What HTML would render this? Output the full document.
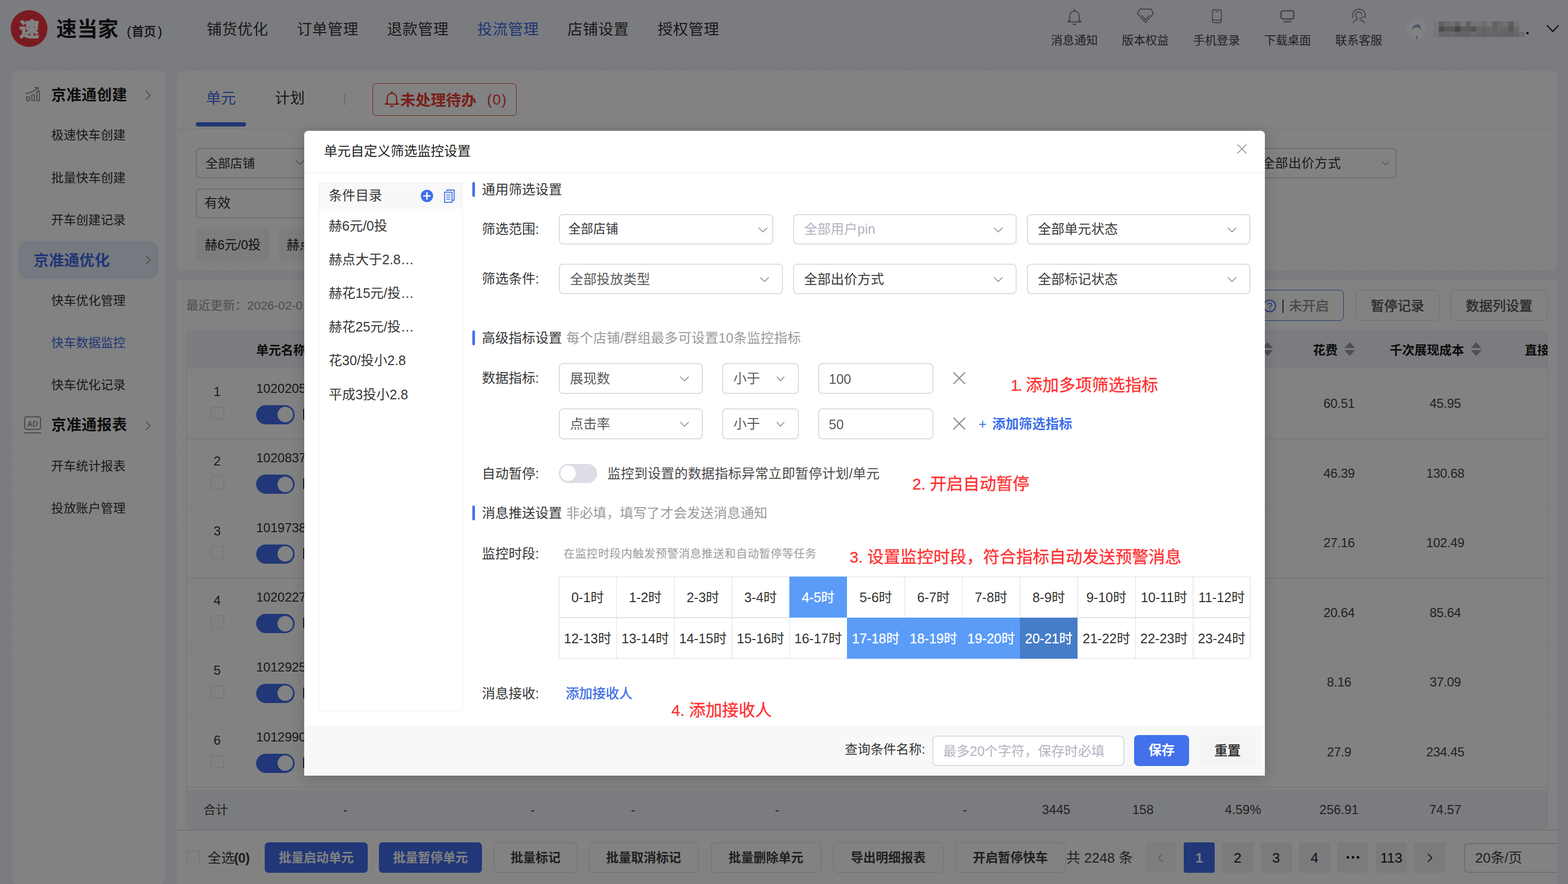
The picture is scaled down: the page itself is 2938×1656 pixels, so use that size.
<!DOCTYPE html>
<html lang="zh-CN"><head><meta charset="utf-8"><title>速当家</title><style>
html,body{margin:0;padding:0;}
body{width:2938px;height:1656px;overflow:hidden;position:relative;font-family:"Liberation Sans", "Noto Sans CJK SC", sans-serif;background:#f1f3fc;}
#bg{position:absolute;left:0;top:0;width:2938px;height:1656px;overflow:hidden;background:linear-gradient(180deg,#f1f3fb 0%,#f0f2fa 100%);}
#bg>div,#bg>svg,#modal>div,#modal>svg{position:absolute;}
.t{white-space:nowrap;}
#mask{position:absolute;left:0;top:0;width:2938px;height:1656px;background:rgba(0,0,0,0.49);}
#modal{position:absolute;left:570px;top:245px;width:1800px;height:1207.5px;background:#fff;border-radius:8px 8px 0 0;box-shadow:0 5px 26px rgba(0,0,0,0.19);}
</style></head><body>
<div id="bg">
<div style="left:20px;top:19px;width:69px;height:69px;border-radius:50%;background:#ee3541;"></div>
<div class="t" style="left:-345px;width:800px;text-align:center;top:31.3px;font-size:37px;line-height:52px;height:52px;color:#fff;font-weight:900;-webkit-text-stroke:1.1px #fff;stroke:#fff;stroke-width:30;">速</div>
<div class="t" style="left:105.5px;top:27.8px;font-size:38.4px;line-height:54px;height:54px;color:#1a1a1a;font-weight:700;letter-spacing:0.5px;--ls:0.5px;">速当家</div>
<div class="t" style="left:237.5px;top:41.5px;font-size:25px;line-height:35px;height:35px;color:#1a1a1a;font-weight:400;">(</div>
<div class="t" style="left:247px;top:43.6px;font-size:22.6px;line-height:32px;height:32px;color:#1a1a1a;font-weight:400;-webkit-text-stroke:0.5px #1a1a1a;stroke:#1a1a1a;stroke-width:22;">首页</div>
<div class="t" style="left:295.5px;top:41.5px;font-size:25px;line-height:35px;height:35px;color:#1a1a1a;font-weight:400;">)</div>
<div class="t" style="left:387.3px;top:35px;font-size:28.3px;line-height:40px;height:40px;color:#333;font-weight:400;letter-spacing:0.5px;--ls:0.5px;">铺货优化</div>
<div class="t" style="left:556.3px;top:35px;font-size:28.3px;line-height:40px;height:40px;color:#333;font-weight:400;letter-spacing:0.5px;--ls:0.5px;">订单管理</div>
<div class="t" style="left:725.3px;top:35px;font-size:28.3px;line-height:40px;height:40px;color:#333;font-weight:400;letter-spacing:0.5px;--ls:0.5px;">退款管理</div>
<div class="t" style="left:894.3px;top:35px;font-size:28.3px;line-height:40px;height:40px;color:#3f6be6;font-weight:400;letter-spacing:0.5px;--ls:0.5px;">投流管理</div>
<div class="t" style="left:1063.3px;top:35px;font-size:28.3px;line-height:40px;height:40px;color:#333;font-weight:400;letter-spacing:0.5px;--ls:0.5px;">店铺设置</div>
<div class="t" style="left:1232.3px;top:35px;font-size:28.3px;line-height:40px;height:40px;color:#333;font-weight:400;letter-spacing:0.5px;--ls:0.5px;">授权管理</div>
<div class="t" style="left:1613px;width:800px;text-align:center;top:59.5px;font-size:22px;line-height:31px;height:31px;color:#444;font-weight:400;">消息通知</div>
<div class="t" style="left:1746px;width:800px;text-align:center;top:59.5px;font-size:22px;line-height:31px;height:31px;color:#444;font-weight:400;">版本权益</div>
<div class="t" style="left:1879.5px;width:800px;text-align:center;top:59.5px;font-size:22px;line-height:31px;height:31px;color:#444;font-weight:400;">手机登录</div>
<div class="t" style="left:2012.5px;width:800px;text-align:center;top:59.5px;font-size:22px;line-height:31px;height:31px;color:#444;font-weight:400;">下载桌面</div>
<div class="t" style="left:2146px;width:800px;text-align:center;top:59.5px;font-size:22px;line-height:31px;height:31px;color:#444;font-weight:400;">联系客服</div>
<svg style="left:1996px;top:12px;" width="34" height="38" viewBox="0 0 34 38" fill="none"><path d="M8.5 28.8 V17.45 A8.75 8.75 0 0 1 26 17.45 V28.8 M8.5 25 L5.4 28.6 M26 25 L29.1 28.6 M4.8 29.1 H29.7" stroke="#86868c" stroke-width="2" stroke-linecap="round" stroke-linejoin="round"/><circle cx="17.25" cy="6.7" r="1.7" fill="#86868c"/><path d="M13.9 32.2 h6.6 a3.3 3.1 0 0 1 -6.6 0z" fill="#86868c"/></svg>
<svg style="left:2128px;top:13px;" width="36" height="34" viewBox="0 0 36 34" fill="none"><path d="M7.6 4 H28.9 L33.1 12.3 L18.3 29.2 L3.3 12.3 Z M11.1 15.7 L18.3 24 L25.5 15.7" stroke="#86868c" stroke-width="2" stroke-linejoin="round" stroke-linecap="round"/></svg>
<svg style="left:2268px;top:15px;" width="24" height="30" viewBox="0 0 24 30" fill="none"><rect x="3.8" y="3.3" width="16.5" height="24.2" rx="3" stroke="#86868c" stroke-width="1.9"/><path d="M4 22.6 h16" stroke="#86868c" stroke-width="1.8"/><path d="M10.2 6.7 h3.8" stroke="#86868c" stroke-width="1.7" stroke-linecap="round"/></svg>
<svg style="left:2396px;top:16px;" width="32" height="28" viewBox="0 0 32 28" fill="none"><rect x="4.3" y="4.3" width="23.8" height="15.2" rx="3.5" stroke="#86868c" stroke-width="2.6"/><path d="M10 24.7 h12.600" stroke="#86868c" stroke-width="2.4" stroke-linecap="round"/></svg>
<svg style="left:2530px;top:13px;" width="32" height="34" viewBox="0 0 32 34" fill="none"><path d="M4.700 20 v-4 a11.8 11.8 0 0 1 23.600 0 v4 M21.900 14.500 A6 6 0 1 0 13 20.700 L13 23.500 Q7 25 5.500 30 M25.500 17.500 Q23.500 20.500 17.500 21 M18.500 24.500 Q25 25.500 26.500 30" stroke="#86868c" stroke-width="1.900" stroke-linecap="round" stroke-linejoin="round"/></svg>
<div style="left:2634px;top:33.5px;width:40px;height:40px;border-radius:50%;background:#fcfdff;overflow:hidden;"></div>
<svg style="left:2634px;top:33.5px;" width="40" height="40" viewBox="0 0 40 40" fill="none"><defs><clipPath id="avc"><circle cx="20" cy="20" r="20"/></clipPath></defs><g clip-path="url(#avc)"><ellipse cx="20.500" cy="39" rx="12.500" ry="6" fill="#ffffff"/><path d="M17 30 h7 v6 h-7z" fill="#fdfdfd"/><circle cx="20.500" cy="24" r="7.300" fill="#ffffff"/><path d="M12.600 23.500 c-1.200 -7.500 3.200 -11.500 8 -11.200 c1 -1.300 2.600 -1.200 3 -0.300 c4 1.200 5.500 6 4.600 11 c-1.200 -3.600 -3 -5.400 -7 -5.700 c-4.600 0 -7.400 2 -8.600 6.200z" fill="#9aabcf"/><path d="M19.600 33.500 h1.800 l0.700 5.500 h-3.200z" fill="#8ea2d2"/></g></svg>
<svg style="left:2685.6px;top:40px;filter:blur(0.600px);" width="174" height="30" viewBox="0 0 174 30" fill="none"><rect x="0" y="0" width="10" height="29.2" fill="rgb(233,233,237)"/><rect x="10" y="0" width="10.1" height="9.900" fill="rgb(188,188,192)"/><rect x="20.03" y="0" width="10.1" height="9.900" fill="rgb(210,210,214)"/><rect x="30.06" y="0" width="10.1" height="9.900" fill="rgb(216,216,220)"/><rect x="40.09" y="0" width="10.1" height="9.900" fill="rgb(192,192,196)"/><rect x="50.12" y="0" width="10.1" height="9.900" fill="rgb(231,231,235)"/><rect x="60.15" y="0" width="10.1" height="9.900" fill="rgb(190,190,194)"/><rect x="70.18" y="0" width="10.1" height="9.900" fill="rgb(225,225,229)"/><rect x="80.21" y="0" width="10.1" height="9.900" fill="rgb(227,227,231)"/><rect x="90.24" y="0" width="10.1" height="9.900" fill="rgb(212,212,216)"/><rect x="100.27" y="0" width="10.1" height="9.900" fill="rgb(235,235,239)"/><rect x="110.3" y="0" width="10.1" height="9.900" fill="rgb(190,190,194)"/><rect x="120.33" y="0" width="10.1" height="9.900" fill="rgb(208,208,212)"/><rect x="130.36" y="0" width="10.1" height="9.900" fill="rgb(220,220,224)"/><rect x="140.39" y="0" width="10.1" height="9.900" fill="rgb(182,182,186)"/><rect x="150.42" y="0" width="10.1" height="9.900" fill="rgb(227,227,231)"/><rect x="10" y="9.7" width="10.1" height="9.900" fill="rgb(149,149,153)"/><rect x="20.03" y="9.7" width="10.1" height="9.900" fill="rgb(176,176,180)"/><rect x="30.06" y="9.7" width="10.1" height="9.900" fill="rgb(173,173,177)"/><rect x="40.09" y="9.7" width="10.1" height="9.900" fill="rgb(137,137,141)"/><rect x="50.12" y="9.7" width="10.1" height="9.900" fill="rgb(180,180,184)"/><rect x="60.15" y="9.7" width="10.1" height="9.900" fill="rgb(176,176,180)"/><rect x="70.18" y="9.7" width="10.1" height="9.900" fill="rgb(165,165,169)"/><rect x="80.21" y="9.7" width="10.1" height="9.900" fill="rgb(200,200,204)"/><rect x="90.24" y="9.7" width="10.1" height="9.900" fill="rgb(192,192,196)"/><rect x="100.27" y="9.7" width="10.1" height="9.900" fill="rgb(204,204,208)"/><rect x="110.3" y="9.7" width="10.1" height="9.900" fill="rgb(196,196,200)"/><rect x="120.33" y="9.7" width="10.1" height="9.900" fill="rgb(204,204,208)"/><rect x="130.36" y="9.7" width="10.1" height="9.900" fill="rgb(196,196,200)"/><rect x="140.39" y="9.7" width="10.1" height="9.900" fill="rgb(169,169,173)"/><rect x="150.42" y="9.7" width="10.1" height="9.900" fill="rgb(204,204,208)"/><rect x="10" y="19.4" width="10.1" height="9.900" fill="rgb(200,200,204)"/><rect x="20.03" y="19.4" width="10.1" height="9.900" fill="rgb(200,200,204)"/><rect x="30.06" y="19.4" width="10.1" height="9.900" fill="rgb(208,208,212)"/><rect x="40.09" y="19.4" width="10.1" height="9.900" fill="rgb(192,192,196)"/><rect x="50.12" y="19.4" width="10.1" height="9.900" fill="rgb(196,196,200)"/><rect x="60.15" y="19.4" width="10.1" height="9.900" fill="rgb(196,196,200)"/><rect x="70.18" y="19.4" width="10.1" height="9.900" fill="rgb(208,208,212)"/><rect x="80.21" y="19.4" width="10.1" height="9.900" fill="rgb(200,200,204)"/><rect x="90.24" y="19.4" width="10.1" height="9.900" fill="rgb(196,196,200)"/><rect x="100.27" y="19.4" width="10.1" height="9.900" fill="rgb(200,200,204)"/><rect x="110.3" y="19.4" width="10.1" height="9.900" fill="rgb(200,200,204)"/><rect x="120.33" y="19.4" width="10.1" height="9.900" fill="rgb(196,196,200)"/><rect x="130.36" y="19.4" width="10.1" height="9.900" fill="rgb(192,192,196)"/><rect x="140.39" y="19.4" width="10.1" height="9.900" fill="rgb(192,192,196)"/><rect x="150.42" y="19.4" width="10.1" height="9.900" fill="rgb(200,200,204)"/><rect x="160.45" y="19.4" width="10.1" height="9.900" fill="rgb(212,212,216)"/></svg>
<div style="left:2860.4px;top:60px;width:3.6px;height:3.6px;background:#111;"></div>
<svg style="left:2897.2px;top:46px;" width="25" height="15" viewBox="0 0 25 15" fill="none"><path d="M2 2 L12.5 13 L23 2" stroke="#1a1a1a" stroke-width="2.2" stroke-linecap="round" stroke-linejoin="round"/></svg>
<div style="left:22px;top:133px;width:288px;height:1523px;background:#fff;border-radius:12px;"></div>
<div style="left:331px;top:133px;width:2587px;height:374px;background:#fff;border-radius:12px;"></div>
<div style="left:331px;top:240px;width:2587px;height:1px;background:#ececf0;"></div>
<div style="left:331px;top:525px;width:2587px;height:1140px;background:#fff;"></div>
<svg style="left:46px;top:161px;" width="32" height="32" viewBox="0 0 32 32" fill="none"><path d="M4 20.500 h5 v7 h-5z M13.500 16.500 h5 v11 h-5z M23 10.500 h5 v17 h-5z" stroke="#8a93a6" stroke-width="2" stroke-linejoin="round"/><path d="M3 14 c8-1 15-4 22-11 M19.500 3 h6 v6" stroke="#8a93a6" stroke-width="2" stroke-linecap="round" stroke-linejoin="round"/></svg>
<div class="t" style="left:96px;top:158.5px;font-size:28px;line-height:39px;height:39px;color:#1a1a1a;font-weight:700;letter-spacing:0.5px;--ls:0.5px;">京准通创建</div>
<svg style="left:271.95px;top:168.5px;" width="11.5" height="19" viewBox="0 0 11.5 19" fill="none"><path d="M2 2 L9.5 9.5 L2 17" stroke="#a0a0a0" stroke-width="1.9" stroke-linecap="round" stroke-linejoin="round"/></svg>
<div class="t" style="left:96px;top:237px;font-size:23.2px;line-height:32px;height:32px;color:#333;font-weight:400;">极速快车创建</div>
<div class="t" style="left:96px;top:316.5px;font-size:23.2px;line-height:32px;height:32px;color:#333;font-weight:400;">批量快车创建</div>
<div class="t" style="left:96px;top:396px;font-size:23.2px;line-height:32px;height:32px;color:#333;font-weight:400;">开车创建记录</div>
<div style="left:34px;top:451px;width:263px;height:72px;background:#e9eefc;border-radius:18px;"></div>
<div class="t" style="left:63px;top:467.5px;font-size:28.5px;line-height:40px;height:40px;color:#3f6be6;font-weight:700;">京准通优化</div>
<svg style="left:271.95px;top:477.5px;" width="11.5" height="19" viewBox="0 0 11.5 19" fill="none"><path d="M2 2 L9.5 9.5 L2 17" stroke="#a0a0a0" stroke-width="1.9" stroke-linecap="round" stroke-linejoin="round"/></svg>
<div class="t" style="left:96px;top:547px;font-size:23.2px;line-height:32px;height:32px;color:#333;font-weight:400;">快车优化管理</div>
<div class="t" style="left:96px;top:626px;font-size:23.2px;line-height:32px;height:32px;color:#3f6be6;font-weight:400;">快车数据监控</div>
<div class="t" style="left:96px;top:705px;font-size:23.2px;line-height:32px;height:32px;color:#333;font-weight:400;">快车优化记录</div>
<svg style="left:43px;top:778px;" width="38" height="38" viewBox="0 0 38 38" fill="none"><rect x="3.2" y="2.8" width="29.800" height="23.400" rx="3.5" stroke="#8a93a6" stroke-width="2"/><path d="M2.2 33 h31.800" stroke="#8a93a6" stroke-width="2"/><text x="18.300" y="20.900" font-family='"Liberation Sans",sans-serif' font-size="14" font-weight="400" letter-spacing="0.4" fill="#8a93a6" stroke="#8a93a6" stroke-width="0.5" text-anchor="middle">AD</text></svg>
<div class="t" style="left:96px;top:777px;font-size:28px;line-height:39px;height:39px;color:#1a1a1a;font-weight:700;letter-spacing:0.5px;--ls:0.5px;">京准通报表</div>
<svg style="left:271.95px;top:787.5px;" width="11.5" height="19" viewBox="0 0 11.5 19" fill="none"><path d="M2 2 L9.5 9.5 L2 17" stroke="#a0a0a0" stroke-width="1.9" stroke-linecap="round" stroke-linejoin="round"/></svg>
<div class="t" style="left:96px;top:857px;font-size:23.2px;line-height:32px;height:32px;color:#333;font-weight:400;">开车统计报表</div>
<div class="t" style="left:96px;top:936px;font-size:23.2px;line-height:32px;height:32px;color:#333;font-weight:400;">投放账户管理</div>
<div class="t" style="left:386px;top:164.5px;font-size:28px;line-height:39px;height:39px;color:#3f6be6;font-weight:400;">单元</div>
<div style="left:367px;top:229px;width:94px;height:8px;background:#3f6be6;border-radius:4px;"></div>
<div class="t" style="left:515px;top:164.5px;font-size:28px;line-height:39px;height:39px;color:#333;font-weight:400;">计划</div>
<div style="left:645px;top:175px;width:1.5px;height:22px;background:#d0d0d4;"></div>
<div style="left:698px;top:156px;width:270px;height:61px;border:1.500px solid #ec3d35;border-radius:7px;box-sizing:border-box;"></div>
<svg style="left:717px;top:166px;" width="34" height="38" viewBox="0 0 34 38" fill="none"><path d="M8.5 28.8 V17.45 A8.75 8.75 0 0 1 26 17.45 V28.8 M8.5 25 L5.4 28.6 M26 25 L29.1 28.6 M4.8 29.1 H29.7" stroke="#ec3d35" stroke-width="2.2" stroke-linecap="round" stroke-linejoin="round"/><circle cx="17.25" cy="6.7" r="1.8" fill="#ec3d35"/><path d="M13.9 31.7 h6.6 a3.3 3.1 0 0 1 -6.6 0z" fill="#ec3d35"/></svg>
<div class="t" style="left:750px;top:167.6px;font-size:28.5px;line-height:40px;height:40px;color:#ec3d35;font-weight:700;">未处理待办</div>
<div class="t" style="left:912.5px;top:167.5px;font-size:27.5px;line-height:38px;height:38px;color:#ec3d35;font-weight:400;letter-spacing:1.4px;">(0)</div>
<div style="left:367px;top:277.4px;width:300px;height:56.3px;border:2px solid #d6d8e2;border-radius:8px;box-sizing:border-box;background:#fff;"></div>
<div class="t" style="left:385px;top:290px;font-size:23.2px;line-height:32px;height:32px;color:#333;font-weight:400;">全部店铺</div>
<svg style="left:553px;top:298.5px;" width="18" height="11" viewBox="0 0 18 11" fill="none"><path d="M2 2 L9 9 L16 2" stroke="#999" stroke-width="1.6" stroke-linecap="round" stroke-linejoin="round"/></svg>
<div style="left:367px;top:353px;width:300px;height:56px;border:2px solid #d6d8e2;border-radius:8px;box-sizing:border-box;background:#fff;"></div>
<div class="t" style="left:383px;top:364px;font-size:24.5px;line-height:34px;height:34px;color:#333;font-weight:400;">有效</div>
<div style="left:2300px;top:277.4px;width:317px;height:56.3px;border:2px solid #d6d8e2;border-radius:8px;box-sizing:border-box;background:#fff;"></div>
<div class="t" style="left:2364.5px;top:289px;font-size:24px;line-height:34px;height:34px;color:#333;font-weight:400;letter-spacing:0.75px;--ls:0.75px;">全部出价方式</div>
<svg style="left:2588px;top:301px;" width="16" height="10" viewBox="0 0 16 10" fill="none"><path d="M2 2 L8 8 L14 2" stroke="#aaa" stroke-width="1.6" stroke-linecap="round" stroke-linejoin="round"/></svg>
<div style="left:367px;top:428px;width:137px;height:61px;background:#f6f6f8;border-radius:7px;"></div>
<div class="t" style="left:383.5px;top:442px;font-size:24px;line-height:34px;height:34px;color:#222;font-weight:400;">赫6元/0投</div>
<div style="left:522px;top:428px;width:137px;height:61px;background:#f6f6f8;border-radius:7px;"></div>
<div class="t" style="left:537px;top:442px;font-size:24px;line-height:34px;height:34px;color:#222;font-weight:400;">赫点</div>
<div class="t" style="left:349px;top:556px;font-size:22.8px;line-height:32px;height:32px;color:#999;font-weight:400;">最近更新：2026-02-0</div>
<div style="left:2290px;top:543px;width:228px;height:58px;border:1.500px solid #3f6be6;border-radius:8px;box-sizing:border-box;"></div>
<svg style="left:2365px;top:559px;" width="28" height="28" viewBox="0 0 28 28" fill="none"><circle cx="14" cy="14" r="11" stroke="#3f6be6" stroke-width="2"/><text x="14" y="21" font-family='"Liberation Sans",sans-serif' font-size="19" fill="#3f6be6" text-anchor="middle">?</text></svg>
<div style="left:2403px;top:561px;width:2.2px;height:25px;background:#444;"></div>
<div class="t" style="left:2415px;top:556px;font-size:25px;line-height:35px;height:35px;color:#8a8a8a;font-weight:400;-webkit-text-stroke:0.3px #8a8a8a;stroke:#8a8a8a;stroke-width:12;">未开启</div>
<div style="left:2540px;top:543px;width:157px;height:58px;border:1.500px solid #dcdce2;border-radius:8px;box-sizing:border-box;"></div>
<div class="t" style="left:2218.5px;width:800px;text-align:center;top:556px;font-size:25px;line-height:35px;height:35px;color:#555;font-weight:400;-webkit-text-stroke:0.55px #555;stroke:#555;stroke-width:22;">暂停记录</div>
<div style="left:2718px;top:543px;width:182px;height:58px;border:1.500px solid #dcdce2;border-radius:8px;box-sizing:border-box;"></div>
<div class="t" style="left:2409px;width:800px;text-align:center;top:556px;font-size:25px;line-height:35px;height:35px;color:#555;font-weight:400;-webkit-text-stroke:0.55px #555;stroke:#555;stroke-width:22;">数据列设置</div>
<div style="left:349px;top:619px;width:2551px;height:934px;border:1.500px solid #e6e6ec;border-radius:8px;box-sizing:border-box;"></div>
<div style="left:350px;top:620px;width:2549px;height:70px;background:#f2f3fa;border-radius:7px 7px 0 0;"></div>
<div class="t" style="left:480px;top:639.5px;font-size:23.2px;line-height:32px;height:32px;color:#161616;font-weight:700;">单元名称</div>
<div class="t" style="left:2460px;top:639.5px;font-size:23.2px;line-height:32px;height:32px;color:#161616;font-weight:700;">花费</div>
<svg style="left:2517px;top:640px;" width="24" height="28" viewBox="0 0 24 28" fill="none"><path d="M12 1 L22 12 H2z M12 27 L22 16 H2z" fill="#9a9ca6"/></svg>
<svg style="left:2363px;top:640px;" width="24" height="28" viewBox="0 0 24 28" fill="none"><path d="M12 1 L22 12 H2z M12 27 L22 16 H2z" fill="#9a9ca6"/></svg>
<div class="t" style="left:2604px;top:639.5px;font-size:23.2px;line-height:32px;height:32px;color:#161616;font-weight:700;">千次展现成本</div>
<svg style="left:2754px;top:640px;" width="24" height="28" viewBox="0 0 24 28" fill="none"><path d="M12 1 L22 12 H2z M12 27 L22 16 H2z" fill="#9a9ca6"/></svg>
<div class="t" style="left:2857px;top:639.5px;font-size:23.2px;line-height:32px;height:32px;color:#161616;font-weight:700;width:43px;overflow:hidden;">直接</div>
<div class="t" style="left:7px;width:800px;text-align:center;top:716.5px;font-size:24px;line-height:34px;height:34px;color:#333;font-weight:400;">1</div>
<div style="left:395px;top:761.5px;width:24.5px;height:24.5px;border:1.500px solid #d5d9e6;border-radius:4px;box-sizing:border-box;background:#fff;"></div>
<div class="t" style="left:480px;top:710.5px;font-size:24px;line-height:34px;height:34px;color:#333;font-weight:400;">1020205</div>
<div style="left:480px;top:758.5px;width:72px;height:36px;background:#416ceb;border-radius:18px;"></div>
<div style="left:520px;top:762px;width:29px;height:29px;background:#fff;border-radius:50%;"></div>
<div style="left:568px;top:765.5px;width:6px;height:20px;background:#333;"></div>
<div class="t" style="left:2109px;width:800px;text-align:center;top:739px;font-size:24px;line-height:34px;height:34px;color:#444;font-weight:400;letter-spacing:-0.3px;">60.51</div>
<div class="t" style="left:2308px;width:800px;text-align:center;top:739px;font-size:24px;line-height:34px;height:34px;color:#444;font-weight:400;letter-spacing:-0.3px;">45.95</div>
<div style="left:350px;top:821.1px;width:2549px;height:1.5px;background:#eeeff4;"></div>
<div class="t" style="left:7px;width:800px;text-align:center;top:847.1px;font-size:24px;line-height:34px;height:34px;color:#333;font-weight:400;">2</div>
<div style="left:395px;top:892.1px;width:24.5px;height:24.5px;border:1.500px solid #d5d9e6;border-radius:4px;box-sizing:border-box;background:#fff;"></div>
<div class="t" style="left:480px;top:841.1px;font-size:24px;line-height:34px;height:34px;color:#333;font-weight:400;">1020837</div>
<div style="left:480px;top:889.1px;width:72px;height:36px;background:#416ceb;border-radius:18px;"></div>
<div style="left:520px;top:892.6px;width:29px;height:29px;background:#fff;border-radius:50%;"></div>
<div style="left:568px;top:896.1px;width:6px;height:20px;background:#333;"></div>
<div class="t" style="left:2109px;width:800px;text-align:center;top:869.6px;font-size:24px;line-height:34px;height:34px;color:#444;font-weight:400;letter-spacing:-0.3px;">46.39</div>
<div class="t" style="left:2308px;width:800px;text-align:center;top:869.6px;font-size:24px;line-height:34px;height:34px;color:#444;font-weight:400;letter-spacing:-0.3px;">130.68</div>
<div style="left:350px;top:951.7px;width:2549px;height:1.5px;background:#eeeff4;"></div>
<div class="t" style="left:7px;width:800px;text-align:center;top:977.7px;font-size:24px;line-height:34px;height:34px;color:#333;font-weight:400;">3</div>
<div style="left:395px;top:1022.7px;width:24.5px;height:24.5px;border:1.500px solid #d5d9e6;border-radius:4px;box-sizing:border-box;background:#fff;"></div>
<div class="t" style="left:480px;top:971.7px;font-size:24px;line-height:34px;height:34px;color:#333;font-weight:400;">1019738</div>
<div style="left:480px;top:1019.7px;width:72px;height:36px;background:#416ceb;border-radius:18px;"></div>
<div style="left:520px;top:1023.2px;width:29px;height:29px;background:#fff;border-radius:50%;"></div>
<div style="left:568px;top:1026.7px;width:6px;height:20px;background:#333;"></div>
<div class="t" style="left:2109px;width:800px;text-align:center;top:1000.2px;font-size:24px;line-height:34px;height:34px;color:#444;font-weight:400;letter-spacing:-0.3px;">27.16</div>
<div class="t" style="left:2308px;width:800px;text-align:center;top:1000.2px;font-size:24px;line-height:34px;height:34px;color:#444;font-weight:400;letter-spacing:-0.3px;">102.49</div>
<div style="left:350px;top:1082.3px;width:2549px;height:1.5px;background:#eeeff4;"></div>
<div class="t" style="left:7px;width:800px;text-align:center;top:1108.3px;font-size:24px;line-height:34px;height:34px;color:#333;font-weight:400;">4</div>
<div style="left:395px;top:1153.3px;width:24.5px;height:24.5px;border:1.500px solid #d5d9e6;border-radius:4px;box-sizing:border-box;background:#fff;"></div>
<div class="t" style="left:480px;top:1102.3px;font-size:24px;line-height:34px;height:34px;color:#333;font-weight:400;">1020227</div>
<div style="left:480px;top:1150.3px;width:72px;height:36px;background:#416ceb;border-radius:18px;"></div>
<div style="left:520px;top:1153.8px;width:29px;height:29px;background:#fff;border-radius:50%;"></div>
<div style="left:568px;top:1157.3px;width:6px;height:20px;background:#333;"></div>
<div class="t" style="left:2109px;width:800px;text-align:center;top:1130.8px;font-size:24px;line-height:34px;height:34px;color:#444;font-weight:400;letter-spacing:-0.3px;">20.64</div>
<div class="t" style="left:2308px;width:800px;text-align:center;top:1130.8px;font-size:24px;line-height:34px;height:34px;color:#444;font-weight:400;letter-spacing:-0.3px;">85.64</div>
<div style="left:350px;top:1212.9px;width:2549px;height:1.5px;background:#eeeff4;"></div>
<div class="t" style="left:7px;width:800px;text-align:center;top:1238.9px;font-size:24px;line-height:34px;height:34px;color:#333;font-weight:400;">5</div>
<div style="left:395px;top:1283.9px;width:24.5px;height:24.5px;border:1.500px solid #d5d9e6;border-radius:4px;box-sizing:border-box;background:#fff;"></div>
<div class="t" style="left:480px;top:1232.9px;font-size:24px;line-height:34px;height:34px;color:#333;font-weight:400;">1012925</div>
<div style="left:480px;top:1280.9px;width:72px;height:36px;background:#416ceb;border-radius:18px;"></div>
<div style="left:520px;top:1284.4px;width:29px;height:29px;background:#fff;border-radius:50%;"></div>
<div style="left:568px;top:1287.9px;width:6px;height:20px;background:#333;"></div>
<div class="t" style="left:2109px;width:800px;text-align:center;top:1261.4px;font-size:24px;line-height:34px;height:34px;color:#444;font-weight:400;letter-spacing:-0.3px;">8.16</div>
<div class="t" style="left:2308px;width:800px;text-align:center;top:1261.4px;font-size:24px;line-height:34px;height:34px;color:#444;font-weight:400;letter-spacing:-0.3px;">37.09</div>
<div style="left:350px;top:1343.5px;width:2549px;height:1.5px;background:#eeeff4;"></div>
<div class="t" style="left:7px;width:800px;text-align:center;top:1369.5px;font-size:24px;line-height:34px;height:34px;color:#333;font-weight:400;">6</div>
<div style="left:395px;top:1414.5px;width:24.5px;height:24.5px;border:1.500px solid #d5d9e6;border-radius:4px;box-sizing:border-box;background:#fff;"></div>
<div class="t" style="left:480px;top:1363.5px;font-size:24px;line-height:34px;height:34px;color:#333;font-weight:400;">1012990</div>
<div style="left:480px;top:1411.5px;width:72px;height:36px;background:#416ceb;border-radius:18px;"></div>
<div style="left:520px;top:1415px;width:29px;height:29px;background:#fff;border-radius:50%;"></div>
<div style="left:568px;top:1418.5px;width:6px;height:20px;background:#333;"></div>
<div class="t" style="left:2109px;width:800px;text-align:center;top:1392px;font-size:24px;line-height:34px;height:34px;color:#444;font-weight:400;letter-spacing:-0.3px;">27.9</div>
<div class="t" style="left:2308px;width:800px;text-align:center;top:1392px;font-size:24px;line-height:34px;height:34px;color:#444;font-weight:400;letter-spacing:-0.3px;">234.45</div>
<div style="left:350px;top:1473.5px;width:2549px;height:1.5px;background:#e6e7ee;"></div>
<div style="left:350px;top:1479.5px;width:2549px;height:72.5px;background:#f2f3fa;border-radius:0 0 7px 7px;"></div>
<div class="t" style="left:381px;top:1501px;font-size:23.2px;line-height:32px;height:32px;color:#444;font-weight:400;">合计</div>
<div class="t" style="left:247px;width:800px;text-align:center;top:1500px;font-size:24px;line-height:34px;height:34px;color:#444;font-weight:400;">-</div>
<div class="t" style="left:598px;width:800px;text-align:center;top:1500px;font-size:24px;line-height:34px;height:34px;color:#444;font-weight:400;">-</div>
<div class="t" style="left:786px;width:800px;text-align:center;top:1500px;font-size:24px;line-height:34px;height:34px;color:#444;font-weight:400;">-</div>
<div class="t" style="left:1056px;width:800px;text-align:center;top:1500px;font-size:24px;line-height:34px;height:34px;color:#444;font-weight:400;">-</div>
<div class="t" style="left:1408px;width:800px;text-align:center;top:1500px;font-size:24px;line-height:34px;height:34px;color:#444;font-weight:400;">-</div>
<div class="t" style="left:1579px;width:800px;text-align:center;top:1500px;font-size:24px;line-height:34px;height:34px;color:#444;font-weight:400;">3445</div>
<div class="t" style="left:1741.5px;width:800px;text-align:center;top:1500px;font-size:24px;line-height:34px;height:34px;color:#444;font-weight:400;">158</div>
<div class="t" style="left:1929px;width:800px;text-align:center;top:1500px;font-size:24px;line-height:34px;height:34px;color:#444;font-weight:400;">4.59%</div>
<div class="t" style="left:2109px;width:800px;text-align:center;top:1500px;font-size:24px;line-height:34px;height:34px;color:#444;font-weight:400;">256.91</div>
<div class="t" style="left:2308px;width:800px;text-align:center;top:1500px;font-size:24px;line-height:34px;height:34px;color:#444;font-weight:400;">74.57</div>
<div style="left:331px;top:1554px;width:2587px;height:1.5px;background:#e4e4ea;"></div>
<div style="left:349px;top:1594px;width:25px;height:25px;border:1.500px solid #d5d9e6;border-radius:4px;box-sizing:border-box;background:#fff;"></div>
<div class="t" style="left:389px;top:1589px;font-size:25.5px;line-height:36px;height:36px;color:#3a3a3a;font-weight:400;">全选</div>
<div class="t" style="left:438.5px;top:1590px;font-size:25px;line-height:35px;height:35px;color:#3a3a3a;font-weight:700;letter-spacing:-0.5px;">(0)</div>
<div style="left:496px;top:1578px;width:193px;height:56.5px;background:#416ceb;border-radius:7px;"></div>
<div class="t" style="left:192.5px;width:800px;text-align:center;top:1590.5px;font-size:23.4px;line-height:33px;height:33px;color:#fff;font-weight:700;">批量启动单元</div>
<div style="left:710px;top:1578px;width:193px;height:56.5px;background:#416ceb;border-radius:7px;"></div>
<div class="t" style="left:406.5px;width:800px;text-align:center;top:1590.5px;font-size:23.4px;line-height:33px;height:33px;color:#fff;font-weight:700;">批量暂停单元</div>
<div style="left:925px;top:1578px;width:157px;height:56.5px;border:1.500px solid #dcdce2;border-radius:8px;box-sizing:border-box;"></div>
<div class="t" style="left:603.5px;width:800px;text-align:center;top:1590.5px;font-size:23.4px;line-height:33px;height:33px;color:#404040;font-weight:700;">批量标记</div>
<div style="left:1103px;top:1578px;width:206px;height:56.5px;border:1.500px solid #dcdce2;border-radius:8px;box-sizing:border-box;"></div>
<div class="t" style="left:806px;width:800px;text-align:center;top:1590.5px;font-size:23.4px;line-height:33px;height:33px;color:#404040;font-weight:700;">批量取消标记</div>
<div style="left:1332px;top:1578px;width:206.5px;height:56.5px;border:1.500px solid #dcdce2;border-radius:8px;box-sizing:border-box;"></div>
<div class="t" style="left:1035.25px;width:800px;text-align:center;top:1590.5px;font-size:23.4px;line-height:33px;height:33px;color:#404040;font-weight:700;">批量删除单元</div>
<div style="left:1561px;top:1578px;width:206.5px;height:56.5px;border:1.500px solid #dcdce2;border-radius:8px;box-sizing:border-box;"></div>
<div class="t" style="left:1264.25px;width:800px;text-align:center;top:1590.5px;font-size:23.4px;line-height:33px;height:33px;color:#404040;font-weight:700;">导出明细报表</div>
<div style="left:1790px;top:1578px;width:206.5px;height:56.5px;border:1.500px solid #dcdce2;border-radius:8px;box-sizing:border-box;"></div>
<div class="t" style="left:1493.25px;width:800px;text-align:center;top:1590.5px;font-size:23.4px;line-height:33px;height:33px;color:#404040;font-weight:700;">开启暂停快车</div>
<div class="t" style="left:1998px;top:1588.5px;font-size:26px;line-height:36px;height:36px;color:#444;font-weight:400;">共 2248 条</div>
<div style="left:2146.5px;top:1578px;width:57.5px;height:56.5px;background:#f5f6f9;border-radius:4px;"></div>
<svg style="left:2168.5px;top:1597.5px;" width="11" height="18" viewBox="0 0 11 18" fill="none"><path d="M9 2 L2 9 L9 16" stroke="#aaa" stroke-width="1.6" stroke-linecap="round" stroke-linejoin="round"/></svg>
<div style="left:2218px;top:1578px;width:58px;height:56.5px;background:#416ceb;border-radius:4px;"></div>
<div class="t" style="left:1847px;width:800px;text-align:center;top:1589px;font-size:26px;line-height:36px;height:36px;color:#fff;font-weight:700;">1</div>
<div style="left:2290px;top:1578px;width:58px;height:56.5px;background:#f0f1f5;border-radius:4px;"></div>
<div class="t" style="left:1919px;width:800px;text-align:center;top:1589px;font-size:26px;line-height:36px;height:36px;color:#1a1a1a;font-weight:400;">2</div>
<div style="left:2362px;top:1578px;width:58px;height:56.5px;background:#f0f1f5;border-radius:4px;"></div>
<div class="t" style="left:1991px;width:800px;text-align:center;top:1589px;font-size:26px;line-height:36px;height:36px;color:#1a1a1a;font-weight:400;">3</div>
<div style="left:2434px;top:1578px;width:58px;height:56.5px;background:#f0f1f5;border-radius:4px;"></div>
<div class="t" style="left:2063px;width:800px;text-align:center;top:1589px;font-size:26px;line-height:36px;height:36px;color:#1a1a1a;font-weight:400;">4</div>
<div style="left:2506px;top:1578px;width:58px;height:56.5px;background:#f0f1f5;border-radius:4px;"></div>
<svg style="left:2520px;top:1600px;" width="30" height="12" viewBox="0 0 30 12" fill="none"><circle cx="5.500" cy="6" r="2.500" fill="#1a1a1a"/><circle cx="15" cy="6" r="2.500" fill="#1a1a1a"/><circle cx="24.500" cy="6" r="2.500" fill="#1a1a1a"/></svg>
<div style="left:2578px;top:1578px;width:58px;height:56.5px;background:#f0f1f5;border-radius:4px;"></div>
<div class="t" style="left:2207px;width:800px;text-align:center;top:1589px;font-size:26px;line-height:36px;height:36px;color:#1a1a1a;font-weight:400;">113</div>
<div style="left:2650px;top:1578px;width:57.5px;height:56.5px;background:#f0f1f5;border-radius:4px;"></div>
<svg style="left:2673.5px;top:1597.5px;" width="11" height="18" viewBox="0 0 11 18" fill="none"><path d="M2 2 L9 9 L2 16" stroke="#333" stroke-width="1.8" stroke-linecap="round" stroke-linejoin="round"/></svg>
<div style="left:2743px;top:1579px;width:175px;height:55.5px;border:2px solid #d6d8e2;border-right:none;border-radius:8px 0 0 8px;box-sizing:border-box;"></div>
<div class="t" style="left:2764px;top:1588.5px;font-size:26px;line-height:36px;height:36px;color:#444;font-weight:400;">20条/页</div>
</div>
<div id="mask"></div>
<div id="modal">
<div class="t" style="left:37px;top:20.5px;font-size:25px;line-height:35px;height:35px;color:#222;font-weight:400;">单元自定义筛选监控设置</div>
<div style="left:0px;top:77.5px;width:1800px;height:1.5px;background:#ececf0;"></div>
<svg style="left:1746.8px;top:23.9px;" width="20" height="20" viewBox="0 0 20 20" fill="none"><path d="M2 2 L18 18 M18 2 L2 18" stroke="#8a8c96" stroke-width="1.6" stroke-linecap="round"/></svg>
<div style="left:27px;top:97px;width:270px;height:990px;border:1.500px solid #ececf0;box-sizing:border-box;"></div>
<div style="left:28px;top:98px;width:268px;height:47.5px;background:#f8f8f8;"></div>
<div class="t" style="left:46px;top:103.5px;font-size:25px;line-height:35px;height:35px;color:#363636;font-weight:400;">条件目录</div>
<svg style="left:218px;top:110px;" width="24" height="24" viewBox="0 0 24 24" fill="none"><circle cx="12" cy="12" r="11.500" fill="#3d6fe8"/><path d="M12 6 v12 M6 12 h12" stroke="#fff" stroke-width="2.6" stroke-linecap="round"/></svg>
<svg style="left:260px;top:108px;" width="24" height="28" viewBox="0 0 24 28" fill="none"><path d="M7 5 V3 h14 v19 h-3" stroke="#3d6fe8" stroke-width="1.800" stroke-linejoin="round"/><rect x="3" y="7" width="14" height="19" stroke="#3d6fe8" stroke-width="1.800"/><path d="M6 12 h8 M6 16 h8 M6 20 h8" stroke="#3d6fe8" stroke-width="1.600"/></svg>
<div class="t" style="left:46px;top:160.5px;font-size:25px;line-height:35px;height:35px;color:#363636;font-weight:400;">赫6元/0投</div>
<div class="t" style="left:46px;top:223.7px;font-size:25px;line-height:35px;height:35px;color:#363636;font-weight:400;">赫点大于2.8…</div>
<div class="t" style="left:46px;top:286.9px;font-size:25px;line-height:35px;height:35px;color:#363636;font-weight:400;">赫花15元/投…</div>
<div class="t" style="left:46px;top:350.1px;font-size:25px;line-height:35px;height:35px;color:#363636;font-weight:400;">赫花25元/投…</div>
<div class="t" style="left:46px;top:413.3px;font-size:25px;line-height:35px;height:35px;color:#363636;font-weight:400;">花30/投小2.8</div>
<div class="t" style="left:46px;top:476.5px;font-size:25px;line-height:35px;height:35px;color:#363636;font-weight:400;">平成3投小2.8</div>
<div style="left:315px;top:95.5px;width:4.8px;height:28.5px;background:#4672ee;border-radius:2.4px;"></div>
<div class="t" style="left:333px;top:92.5px;font-size:25px;line-height:35px;height:35px;color:#363636;font-weight:400;">通用筛选设置</div>
<div class="t" style="left:333px;top:167.3px;font-size:25px;line-height:35px;height:35px;color:#363636;font-weight:400;">筛选范围:</div>
<div style="left:477px;top:156px;width:401.5px;height:56.5px;border:2px solid #dcdce6;border-radius:8px;box-sizing:border-box;background:#fff;"></div>
<div class="t" style="left:495px;top:168.25px;font-size:23.3px;line-height:33px;height:33px;color:#333;font-weight:400;">全部店铺</div>
<svg style="left:849.5px;top:179.5px;" width="19" height="11.5" viewBox="0 0 19 11.5" fill="none"><path d="M2 2 L9.5 9.5 L17 2" stroke="#8a8a90" stroke-width="1.6" stroke-linecap="round" stroke-linejoin="round"/></svg>
<div style="left:915.5px;top:156px;width:419px;height:56.5px;border:2px solid #dcdce6;border-radius:8px;box-sizing:border-box;background:#fff;"></div>
<div class="t" style="left:936.5px;top:167.25px;font-size:25px;line-height:35px;height:35px;color:#b2b4c0;font-weight:400;">全部用户pin</div>
<svg style="left:1290.5px;top:179.5px;" width="19" height="11.5" viewBox="0 0 19 11.5" fill="none"><path d="M2 2 L9.5 9.5 L17 2" stroke="#8a8a90" stroke-width="1.6" stroke-linecap="round" stroke-linejoin="round"/></svg>
<div style="left:1353.5px;top:156px;width:419px;height:56.5px;border:2px solid #dcdce6;border-radius:8px;box-sizing:border-box;background:#fff;"></div>
<div class="t" style="left:1374.5px;top:167.25px;font-size:25px;line-height:35px;height:35px;color:#3a3a3a;font-weight:400;">全部单元状态</div>
<svg style="left:1728.5px;top:179.5px;" width="19" height="11.5" viewBox="0 0 19 11.5" fill="none"><path d="M2 2 L9.5 9.5 L17 2" stroke="#8a8a90" stroke-width="1.6" stroke-linecap="round" stroke-linejoin="round"/></svg>
<div class="t" style="left:333px;top:260.3px;font-size:25px;line-height:35px;height:35px;color:#363636;font-weight:400;">筛选条件:</div>
<div style="left:477px;top:249px;width:419.5px;height:57px;border:2px solid #dcdce6;border-radius:8px;box-sizing:border-box;background:#fff;"></div>
<div class="t" style="left:498px;top:260.5px;font-size:25px;line-height:35px;height:35px;color:#5a5a5a;font-weight:400;">全部投放类型</div>
<svg style="left:852.5px;top:272.75px;" width="19" height="11.5" viewBox="0 0 19 11.5" fill="none"><path d="M2 2 L9.5 9.5 L17 2" stroke="#8a8a90" stroke-width="1.6" stroke-linecap="round" stroke-linejoin="round"/></svg>
<div style="left:915.5px;top:249px;width:419px;height:57px;border:2px solid #dcdce6;border-radius:8px;box-sizing:border-box;background:#fff;"></div>
<div class="t" style="left:936.5px;top:260.5px;font-size:25px;line-height:35px;height:35px;color:#3a3a3a;font-weight:400;">全部出价方式</div>
<svg style="left:1290.5px;top:272.75px;" width="19" height="11.5" viewBox="0 0 19 11.5" fill="none"><path d="M2 2 L9.5 9.5 L17 2" stroke="#8a8a90" stroke-width="1.6" stroke-linecap="round" stroke-linejoin="round"/></svg>
<div style="left:1353.5px;top:249px;width:419px;height:57px;border:2px solid #dcdce6;border-radius:8px;box-sizing:border-box;background:#fff;"></div>
<div class="t" style="left:1374.5px;top:260.5px;font-size:25px;line-height:35px;height:35px;color:#3a3a3a;font-weight:400;">全部标记状态</div>
<svg style="left:1728.5px;top:272.75px;" width="19" height="11.5" viewBox="0 0 19 11.5" fill="none"><path d="M2 2 L9.5 9.5 L17 2" stroke="#8a8a90" stroke-width="1.6" stroke-linecap="round" stroke-linejoin="round"/></svg>
<div style="left:315px;top:373.5px;width:4.8px;height:28.5px;background:#4672ee;border-radius:2.4px;"></div>
<div class="t" style="left:333px;top:370.5px;font-size:25px;line-height:35px;height:35px;color:#363636;font-weight:400;">高级指标设置</div>
<div class="t" style="left:491px;top:370.5px;font-size:25px;line-height:35px;height:35px;color:#9a9a9a;font-weight:400;letter-spacing:0.27px;--ls:0.27px;">每个店铺/群组最多可设置10条监控指标</div>
<div class="t" style="left:333px;top:446.3px;font-size:25px;line-height:35px;height:35px;color:#363636;font-weight:400;">数据指标:</div>
<div style="left:477px;top:435px;width:270px;height:57.5px;border:2px solid #dcdce6;border-radius:8px;box-sizing:border-box;background:#fff;"></div>
<div class="t" style="left:498px;top:446.75px;font-size:25px;line-height:35px;height:35px;color:#5a5a5a;font-weight:400;">展现数</div>
<svg style="left:703px;top:459px;" width="19" height="11.5" viewBox="0 0 19 11.5" fill="none"><path d="M2 2 L9.5 9.5 L17 2" stroke="#8a8a90" stroke-width="1.6" stroke-linecap="round" stroke-linejoin="round"/></svg>
<div style="left:783px;top:435px;width:144px;height:57.5px;border:2px solid #dcdce6;border-radius:8px;box-sizing:border-box;background:#fff;"></div>
<div class="t" style="left:804px;top:446.75px;font-size:25px;line-height:35px;height:35px;color:#5a5a5a;font-weight:400;">小于</div>
<svg style="left:884px;top:459px;" width="17" height="11.5" viewBox="0 0 17 11.5" fill="none"><path d="M2 2 L8.5 9.5 L15 2" stroke="#8a8a90" stroke-width="1.6" stroke-linecap="round" stroke-linejoin="round"/></svg>
<div style="left:963px;top:435px;width:215.5px;height:57.5px;border:2px solid #dcdce6;border-radius:8px;box-sizing:border-box;background:#fff;"></div>
<div class="t" style="left:983px;top:447.5px;font-size:25px;line-height:35px;height:35px;color:#5a5a5a;font-weight:400;">100</div>
<svg style="left:1215.1px;top:450.9px;" width="24.8" height="24.8" viewBox="0 0 24.8 24.8" fill="none"><path d="M2 2 L22.8 22.8 M22.8 2 L2 22.8" stroke="#8a8a8a" stroke-width="2.1" stroke-linecap="round"/></svg>
<div style="left:477px;top:520px;width:270px;height:57.5px;border:2px solid #dcdce6;border-radius:8px;box-sizing:border-box;background:#fff;"></div>
<div class="t" style="left:498px;top:531.75px;font-size:25px;line-height:35px;height:35px;color:#5a5a5a;font-weight:400;">点击率</div>
<svg style="left:703px;top:544px;" width="19" height="11.5" viewBox="0 0 19 11.5" fill="none"><path d="M2 2 L9.5 9.5 L17 2" stroke="#8a8a90" stroke-width="1.6" stroke-linecap="round" stroke-linejoin="round"/></svg>
<div style="left:783px;top:520px;width:144px;height:57.5px;border:2px solid #dcdce6;border-radius:8px;box-sizing:border-box;background:#fff;"></div>
<div class="t" style="left:804px;top:531.75px;font-size:25px;line-height:35px;height:35px;color:#5a5a5a;font-weight:400;">小于</div>
<svg style="left:884px;top:544px;" width="17" height="11.5" viewBox="0 0 17 11.5" fill="none"><path d="M2 2 L8.5 9.5 L15 2" stroke="#8a8a90" stroke-width="1.6" stroke-linecap="round" stroke-linejoin="round"/></svg>
<div style="left:963px;top:520px;width:215.5px;height:57.5px;border:2px solid #dcdce6;border-radius:8px;box-sizing:border-box;background:#fff;"></div>
<div class="t" style="left:983px;top:532.5px;font-size:25px;line-height:35px;height:35px;color:#5a5a5a;font-weight:400;">50</div>
<svg style="left:1215.1px;top:535.9px;" width="24.8" height="24.8" viewBox="0 0 24.8 24.8" fill="none"><path d="M2 2 L22.8 22.8 M22.8 2 L2 22.8" stroke="#8a8a8a" stroke-width="2.1" stroke-linecap="round"/></svg>
<div class="t" style="left:1323.8px;top:456px;font-size:29.5px;line-height:41px;height:41px;color:#ff3030;font-weight:400;-webkit-text-stroke:0.3px #ff3030;">1</div>
<div class="t" style="left:1337.6px;top:456px;font-size:29.5px;line-height:41px;height:41px;color:#ff3030;font-weight:400;-webkit-text-stroke:0.3px #ff3030;">.</div>
<div class="t" style="left:1352px;top:455px;font-size:31px;line-height:43px;height:43px;color:#ff3030;font-weight:400;-webkit-text-stroke:0.35px #ff3030;stroke:#ff3030;stroke-width:11;">添加多项筛选指标</div>
<div class="t" style="left:1263.5px;top:531px;font-size:26px;line-height:36px;height:36px;color:#3d6fe8;font-weight:400;">+</div>
<div class="t" style="left:1289px;top:532px;font-size:25px;line-height:35px;height:35px;color:#3d6fe8;font-weight:700;">添加筛选指标</div>
<div class="t" style="left:333px;top:625.3px;font-size:25px;line-height:35px;height:35px;color:#363636;font-weight:400;">自动暂停:</div>
<div style="left:476.8px;top:623.8px;width:72px;height:36px;background:#dddde5;border-radius:18px;"></div>
<div style="left:479.8px;top:627.3px;width:29.2px;height:29.2px;background:#fff;border-radius:50%;"></div>
<div class="t" style="left:568px;top:624.5px;font-size:25px;line-height:35px;height:35px;color:#4a4a4a;font-weight:400;letter-spacing:0.15px;--ls:0.15px;">监控到设置的数据指标异常立即暂停计划/单元</div>
<div class="t" style="left:1139.5px;top:640.5px;font-size:29.5px;line-height:41px;height:41px;color:#ff3030;font-weight:400;-webkit-text-stroke:0.3px #ff3030;">2.</div>
<div class="t" style="left:1172.5px;top:639.5px;font-size:31px;line-height:43px;height:43px;color:#ff3030;font-weight:400;-webkit-text-stroke:0.35px #ff3030;stroke:#ff3030;stroke-width:11;">开启自动暂停</div>
<div style="left:315px;top:701.5px;width:4.8px;height:28.5px;background:#4672ee;border-radius:2.4px;"></div>
<div class="t" style="left:333px;top:698.5px;font-size:25px;line-height:35px;height:35px;color:#363636;font-weight:400;">消息推送设置</div>
<div class="t" style="left:491px;top:698.5px;font-size:25px;line-height:35px;height:35px;color:#9a9a9a;font-weight:400;letter-spacing:0.13px;--ls:0.13px;">非必填，填写了才会发送消息通知</div>
<div class="t" style="left:333px;top:775.3px;font-size:25px;line-height:35px;height:35px;color:#363636;font-weight:400;">监控时段:</div>
<div class="t" style="left:486px;top:776.5px;font-size:21px;line-height:29px;height:29px;color:#9a9a9a;font-weight:400;letter-spacing:0.55px;--ls:0.55px;">在监控时段内触发预警消息推送和自动暂停等任务</div>
<div class="t" style="left:1022px;top:778px;font-size:29.5px;line-height:41px;height:41px;color:#ff3030;font-weight:400;-webkit-text-stroke:0.3px #ff3030;">3.</div>
<div class="t" style="left:1055px;top:777px;font-size:31px;line-height:43px;height:43px;color:#ff3030;font-weight:400;-webkit-text-stroke:0.35px #ff3030;stroke:#ff3030;stroke-width:11;">设置监控时段，符合指标自动发送预警消息</div>
<div style="left:477px;top:835px;width:1296px;height:154px;border:1.500px solid #dedede;box-sizing:border-box;"></div>
<div style="left:909px;top:835px;width:108px;height:76.5px;background:#5b9cf8;"></div>
<div style="left:1017px;top:911.5px;width:108px;height:77.5px;background:#5b9cf8;"></div>
<div style="left:1125px;top:911.5px;width:108px;height:77.5px;background:#5b9cf8;"></div>
<div style="left:1233px;top:911.5px;width:108px;height:77.5px;background:#5b9cf8;"></div>
<div style="left:1341px;top:911.5px;width:108px;height:77.5px;background:#467cc8;"></div>
<div style="left:584.5px;top:835px;width:1.5px;height:76.5px;background:#dedede;"></div>
<div style="left:584.5px;top:911.5px;width:1.5px;height:76.5px;background:#dedede;"></div>
<div style="left:692.5px;top:835px;width:1.5px;height:76.5px;background:#dedede;"></div>
<div style="left:692.5px;top:911.5px;width:1.5px;height:76.5px;background:#dedede;"></div>
<div style="left:800.5px;top:835px;width:1.5px;height:76.5px;background:#dedede;"></div>
<div style="left:800.5px;top:911.5px;width:1.5px;height:76.5px;background:#dedede;"></div>
<div style="left:908.5px;top:911.5px;width:1.5px;height:76.5px;background:#dedede;"></div>
<div style="left:1124.5px;top:835px;width:1.5px;height:76.5px;background:#dedede;"></div>
<div style="left:1232.5px;top:835px;width:1.5px;height:76.5px;background:#dedede;"></div>
<div style="left:1340.5px;top:835px;width:1.5px;height:76.5px;background:#dedede;"></div>
<div style="left:1448.5px;top:835px;width:1.5px;height:76.5px;background:#dedede;"></div>
<div style="left:1556.5px;top:835px;width:1.5px;height:76.5px;background:#dedede;"></div>
<div style="left:1556.5px;top:911.5px;width:1.5px;height:76.5px;background:#dedede;"></div>
<div style="left:1664.5px;top:835px;width:1.5px;height:76.5px;background:#dedede;"></div>
<div style="left:1664.5px;top:911.5px;width:1.5px;height:76.5px;background:#dedede;"></div>
<div style="left:477px;top:911px;width:108px;height:1.5px;background:#e2e2e2;"></div>
<div style="left:585px;top:911px;width:108px;height:1.5px;background:#e2e2e2;"></div>
<div style="left:693px;top:911px;width:108px;height:1.5px;background:#e2e2e2;"></div>
<div style="left:801px;top:911px;width:108px;height:1.5px;background:#e2e2e2;"></div>
<div style="left:1449px;top:911px;width:108px;height:1.5px;background:#e2e2e2;"></div>
<div style="left:1557px;top:911px;width:108px;height:1.5px;background:#e2e2e2;"></div>
<div style="left:1665px;top:911px;width:108px;height:1.5px;background:#e2e2e2;"></div>
<div class="t" style="left:131px;width:800px;text-align:center;top:857.25px;font-size:25px;line-height:35px;height:35px;color:#333;font-weight:400;">0-1时</div>
<div class="t" style="left:239px;width:800px;text-align:center;top:857.25px;font-size:25px;line-height:35px;height:35px;color:#333;font-weight:400;">1-2时</div>
<div class="t" style="left:347px;width:800px;text-align:center;top:857.25px;font-size:25px;line-height:35px;height:35px;color:#333;font-weight:400;">2-3时</div>
<div class="t" style="left:455px;width:800px;text-align:center;top:857.25px;font-size:25px;line-height:35px;height:35px;color:#333;font-weight:400;">3-4时</div>
<div class="t" style="left:563px;width:800px;text-align:center;top:857.25px;font-size:25px;line-height:35px;height:35px;color:#fff;font-weight:400;-webkit-text-stroke:0.3px #fff;stroke:#fff;stroke-width:12;">4-5时</div>
<div class="t" style="left:671px;width:800px;text-align:center;top:857.25px;font-size:25px;line-height:35px;height:35px;color:#333;font-weight:400;">5-6时</div>
<div class="t" style="left:779px;width:800px;text-align:center;top:857.25px;font-size:25px;line-height:35px;height:35px;color:#333;font-weight:400;">6-7时</div>
<div class="t" style="left:887px;width:800px;text-align:center;top:857.25px;font-size:25px;line-height:35px;height:35px;color:#333;font-weight:400;">7-8时</div>
<div class="t" style="left:995px;width:800px;text-align:center;top:857.25px;font-size:25px;line-height:35px;height:35px;color:#333;font-weight:400;">8-9时</div>
<div class="t" style="left:1103px;width:800px;text-align:center;top:857.25px;font-size:25px;line-height:35px;height:35px;color:#333;font-weight:400;">9-10时</div>
<div class="t" style="left:1211px;width:800px;text-align:center;top:857.25px;font-size:25px;line-height:35px;height:35px;color:#333;font-weight:400;">10-11时</div>
<div class="t" style="left:1319px;width:800px;text-align:center;top:857.25px;font-size:25px;line-height:35px;height:35px;color:#333;font-weight:400;">11-12时</div>
<div class="t" style="left:131px;width:800px;text-align:center;top:933.75px;font-size:25px;line-height:35px;height:35px;color:#333;font-weight:400;">12-13时</div>
<div class="t" style="left:239px;width:800px;text-align:center;top:933.75px;font-size:25px;line-height:35px;height:35px;color:#333;font-weight:400;">13-14时</div>
<div class="t" style="left:347px;width:800px;text-align:center;top:933.75px;font-size:25px;line-height:35px;height:35px;color:#333;font-weight:400;">14-15时</div>
<div class="t" style="left:455px;width:800px;text-align:center;top:933.75px;font-size:25px;line-height:35px;height:35px;color:#333;font-weight:400;">15-16时</div>
<div class="t" style="left:563px;width:800px;text-align:center;top:933.75px;font-size:25px;line-height:35px;height:35px;color:#333;font-weight:400;">16-17时</div>
<div class="t" style="left:671px;width:800px;text-align:center;top:933.75px;font-size:25px;line-height:35px;height:35px;color:#fff;font-weight:400;-webkit-text-stroke:0.3px #fff;stroke:#fff;stroke-width:12;">17-18时</div>
<div class="t" style="left:779px;width:800px;text-align:center;top:933.75px;font-size:25px;line-height:35px;height:35px;color:#fff;font-weight:400;-webkit-text-stroke:0.3px #fff;stroke:#fff;stroke-width:12;">18-19时</div>
<div class="t" style="left:887px;width:800px;text-align:center;top:933.75px;font-size:25px;line-height:35px;height:35px;color:#fff;font-weight:400;-webkit-text-stroke:0.3px #fff;stroke:#fff;stroke-width:12;">19-20时</div>
<div class="t" style="left:995px;width:800px;text-align:center;top:933.75px;font-size:25px;line-height:35px;height:35px;color:#fff;font-weight:400;-webkit-text-stroke:0.3px #fff;stroke:#fff;stroke-width:12;">20-21时</div>
<div class="t" style="left:1103px;width:800px;text-align:center;top:933.75px;font-size:25px;line-height:35px;height:35px;color:#333;font-weight:400;">21-22时</div>
<div class="t" style="left:1211px;width:800px;text-align:center;top:933.75px;font-size:25px;line-height:35px;height:35px;color:#333;font-weight:400;">22-23时</div>
<div class="t" style="left:1319px;width:800px;text-align:center;top:933.75px;font-size:25px;line-height:35px;height:35px;color:#333;font-weight:400;">23-24时</div>
<div class="t" style="left:333px;top:1036.8px;font-size:25px;line-height:35px;height:35px;color:#363636;font-weight:400;">消息接收:</div>
<div class="t" style="left:490px;top:1036.8px;font-size:25px;line-height:35px;height:35px;color:#3d6fe8;font-weight:400;-webkit-text-stroke:0.5px #3d6fe8;stroke:#3d6fe8;stroke-width:20;">添加接收人</div>
<div class="t" style="left:688px;top:1064.5px;font-size:29.5px;line-height:41px;height:41px;color:#ff3030;font-weight:400;-webkit-text-stroke:0.3px #ff3030;">4.</div>
<div class="t" style="left:721px;top:1063.5px;font-size:31px;line-height:43px;height:43px;color:#ff3030;font-weight:400;-webkit-text-stroke:0.35px #ff3030;stroke:#ff3030;stroke-width:11;">添加接收人</div>
<div style="left:1px;top:1113.5px;width:1798px;height:93px;background:#f8f8f8;"></div>
<div class="t" style="left:1013px;top:1141.5px;font-size:24px;line-height:34px;height:34px;color:#363636;font-weight:400;">查询条件名称:</div>
<div style="left:1177px;top:1132.5px;width:359.5px;height:57px;border:2px solid #dcdce6;border-radius:8px;box-sizing:border-box;background:#fff;"></div>
<div class="t" style="left:1197px;top:1144.5px;font-size:25px;line-height:35px;height:35px;color:#b2b4c0;font-weight:400;">最多20个字符，保存时必填</div>
<div style="left:1555px;top:1132px;width:103px;height:57.5px;background:#4271eb;border-radius:8px;"></div>
<div class="t" style="left:1206.5px;width:800px;text-align:center;top:1144px;font-size:24.5px;line-height:34px;height:34px;color:#fff;font-weight:700;">保存</div>
<div style="left:1678px;top:1132px;width:104px;height:57.5px;background:#f4f4f4;border-radius:8px;"></div>
<div class="t" style="left:1330px;width:800px;text-align:center;top:1144.5px;font-size:24.5px;line-height:34px;height:34px;color:#2a2a2a;font-weight:400;-webkit-text-stroke:0.6px #2a2a2a;stroke:#2a2a2a;stroke-width:24;">重置</div>
</div>
</body></html>
